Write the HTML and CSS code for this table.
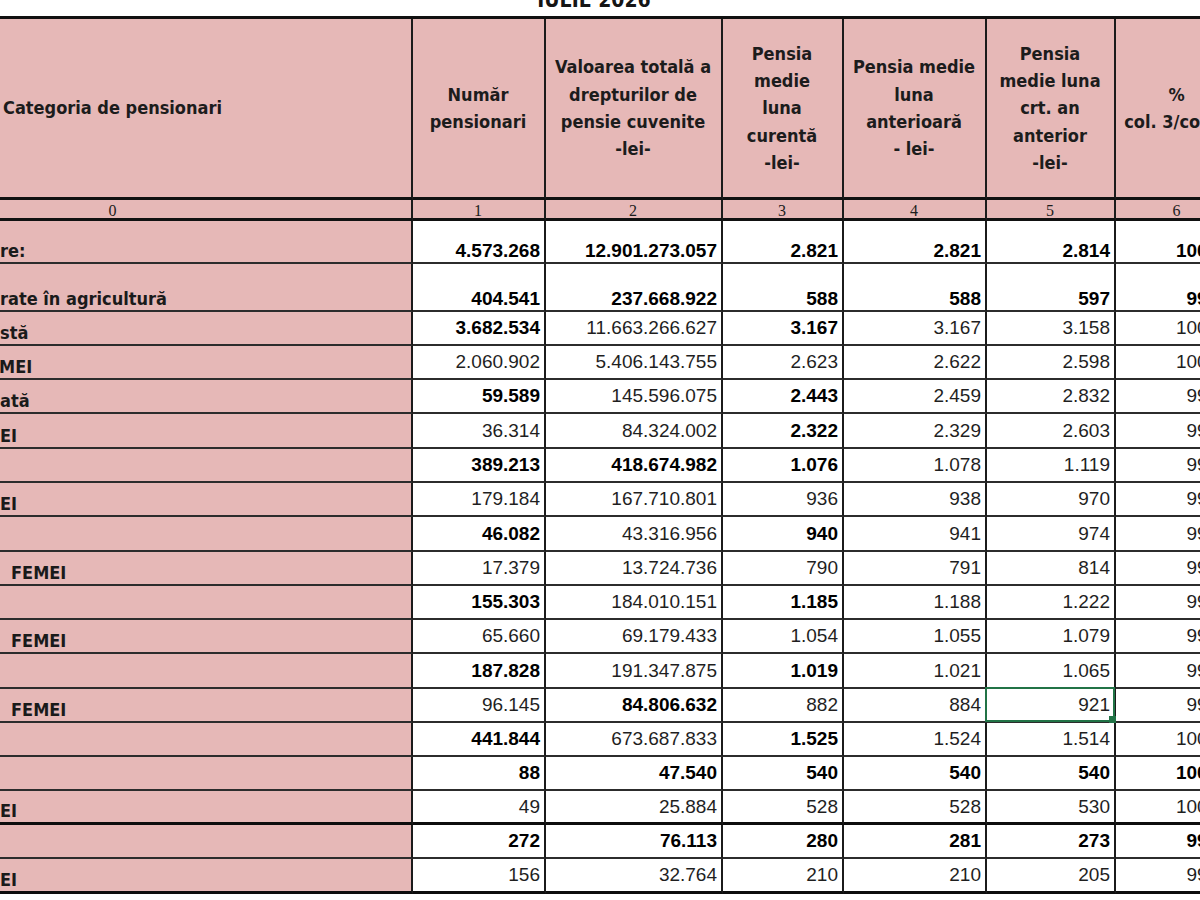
FILE: index.html
```html
<!DOCTYPE html>
<html lang="ro">
<head>
<meta charset="utf-8">
<title>Pensii – IULIE 2026</title>
<link rel="stylesheet" href="styles.css">
</head>
<body>
<div class="title">IULIE 2026</div>
<table class="sheet">
  <colgroup>
    <col class="c0"><col class="c1"><col class="c2"><col class="c3"><col class="c4"><col class="c5"><col class="c6">
  </colgroup>
  <thead>
    <tr class="head">
      <th class="cat">Categoria de pensionari</th>
      <th>Număr<br>pensionari</th>
      <th>Valoarea totală a<br>drepturilor de<br>pensie cuvenite<br>-lei-</th>
      <th>Pensia<br>medie<br>luna<br>curentă<br>-lei-</th>
      <th>Pensia medie<br>luna<br>anterioară<br>- lei-</th>
      <th>Pensia<br>medie luna<br>crt. an<br>anterior<br>-lei-</th>
      <th>%<br>col. 3/col. 4</th>
    </tr>
    <tr class="idx">
      <th class="cat">0</th><th>1</th><th>2</th><th>3</th><th>4</th><th>5</th><th>6</th>
    </tr>
  </thead>
  <tbody>
    <tr class="tall tall1">
      <td class="lbl">re:</td><td class="b">4.573.268</td><td class="b">12.901.273.057</td><td class="b">2.821</td><td class="b">2.821</td><td class="b">2.814</td><td class="b">100,00</td>
    </tr>
    <tr class="tall tall2">
      <td class="lbl">rate în agricultură</td><td class="b">404.541</td><td class="b">237.668.922</td><td class="b">588</td><td class="b">588</td><td class="b">597</td><td class="b">99,98</td>
    </tr>
    <tr class="r34">
      <td class="lbl">stă</td><td class="b">3.682.534</td><td>11.663.266.627</td><td class="b">3.167</td><td>3.167</td><td>3.158</td><td>100,01</td>
    </tr>
    <tr class="r34">
      <td class="lbl cut">EMEI</td><td>2.060.902</td><td>5.406.143.755</td><td>2.623</td><td>2.622</td><td>2.598</td><td>100,04</td>
    </tr>
    <tr class="r34">
      <td class="lbl">ată</td><td class="b">59.589</td><td>145.596.075</td><td class="b">2.443</td><td>2.459</td><td>2.832</td><td>99,35</td>
    </tr>
    <tr class="r35">
      <td class="lbl">EI</td><td>36.314</td><td>84.324.002</td><td class="b">2.322</td><td>2.329</td><td>2.603</td><td>99,70</td>
    </tr>
    <tr class="r34">
      <td class="lbl"></td><td class="b">389.213</td><td class="b">418.674.982</td><td class="b">1.076</td><td>1.078</td><td>1.119</td><td>99,81</td>
    </tr>
    <tr class="r34">
      <td class="lbl">EI</td><td>179.184</td><td>167.710.801</td><td>936</td><td>938</td><td>970</td><td>99,79</td>
    </tr>
    <tr class="r35">
      <td class="lbl"></td><td class="b">46.082</td><td>43.316.956</td><td class="b">940</td><td>941</td><td>974</td><td>99,89</td>
    </tr>
    <tr class="r34">
      <td class="lbl ind">FEMEI</td><td>17.379</td><td>13.724.736</td><td>790</td><td>791</td><td>814</td><td>99,87</td>
    </tr>
    <tr class="r34">
      <td class="lbl"></td><td class="b">155.303</td><td>184.010.151</td><td class="b">1.185</td><td>1.188</td><td>1.222</td><td>99,75</td>
    </tr>
    <tr class="r34">
      <td class="lbl ind">FEMEI</td><td>65.660</td><td>69.179.433</td><td>1.054</td><td>1.055</td><td>1.079</td><td>99,90</td>
    </tr>
    <tr class="r35">
      <td class="lbl"></td><td class="b">187.828</td><td>191.347.875</td><td class="b">1.019</td><td>1.021</td><td>1.065</td><td>99,80</td>
    </tr>
    <tr class="r34">
      <td class="lbl ind">FEMEI</td><td>96.145</td><td class="b">84.806.632</td><td>882</td><td>884</td><td class="selected">921</td><td>99,77</td>
    </tr>
    <tr class="r34">
      <td class="lbl"></td><td class="b">441.844</td><td>673.687.833</td><td class="b">1.525</td><td>1.524</td><td>1.514</td><td>100,07</td>
    </tr>
    <tr class="r34">
      <td class="lbl"></td><td class="b">88</td><td class="b">47.540</td><td class="b">540</td><td class="b">540</td><td class="b">540</td><td class="b">100,00</td>
    </tr>
    <tr class="r34 thick">
      <td class="lbl">EI</td><td>49</td><td>25.884</td><td>528</td><td>528</td><td>530</td><td>100,00</td>
    </tr>
    <tr class="r34">
      <td class="lbl"></td><td class="b">272</td><td class="b">76.113</td><td class="b">280</td><td class="b">281</td><td class="b">273</td><td class="b">99,64</td>
    </tr>
    <tr class="r35 thick">
      <td class="lbl">EI</td><td>156</td><td>32.764</td><td>210</td><td>210</td><td>205</td><td>99,98</td>
    </tr>
  </tbody>
</table>
</body>
</html>
```

FILE: styles.css
```css
* {
  box-sizing: border-box;
}

html,
body {
  margin: 0;
  padding: 0;
  overflow: hidden;
  background: #ffffff;
}

body {
  width: 1200px;
  height: 900px;
}

.title {
  width: 1188px;
  height: 20px;
  margin: -10px 0 6px;
  text-align: center;
  font-family: "DejaVu Sans Condensed", "DejaVu Sans", sans-serif;
  font-stretch: condensed;
  font-weight: bold;
  font-size: 21px;
  line-height: 20px;
  color: #151515;
}

.sheet {
  width: 1240px;
  table-layout: fixed;
  border-collapse: separate;
  border-spacing: 0;
  border-top: 3px solid #111111;
}

.c0 { width: 413px; }
.c1 { width: 133px; }
.c2 { width: 177px; }
.c3 { width: 121px; }
.c4 { width: 143px; }
.c5 { width: 129px; }
.c6 { width: 124px; }

.sheet th,
.sheet td {
  padding: 0 4px 0 3px;
  border-right: 2px solid #1b1b1b;
  border-bottom: 2px solid #2c2c2c;
  white-space: nowrap;
  overflow: hidden;
}

/* header */
.head {
  height: 181px;
}

.head th {
  background: #e6b8b7;
  border-bottom-width: 3px;
  border-bottom-color: #111111;
  font-family: "DejaVu Sans Condensed", "DejaVu Sans", sans-serif;
  font-stretch: condensed;
  font-weight: bold;
  font-size: 18px;
  line-height: 27.3px;
  color: #1c1c1c;
  text-align: center;
  vertical-align: middle;
}

.sheet th.cat {
  padding: 0 186px 0 0;
}

/* column index row */
.idx {
  height: 21px;
}

.idx th {
  background: #e6b8b7;
  border-bottom-width: 3px;
  border-bottom-color: #111111;
  font-family: "Liberation Serif", "Times New Roman", serif;
  font-weight: normal;
  font-size: 16px;
  line-height: 15px;
  color: #1c1c1c;
  text-align: center;
  vertical-align: bottom;
}

/* body */
.sheet tbody td {
  background: #ffffff;
  font-family: "Liberation Sans", Arial, sans-serif;
  font-size: 19px;
  line-height: 22px;
  color: #1f1f1f;
  text-align: right;
  vertical-align: middle;
}

.sheet tbody td.b {
  font-weight: bold;
  color: #000000;
}

.sheet tbody td.lbl {
  background: #e6b8b7;
  padding: 0;
  text-align: left;
  vertical-align: bottom;
  font-family: "DejaVu Sans Condensed", "DejaVu Sans", sans-serif;
  font-stretch: condensed;
  font-weight: bold;
  font-size: 18px;
  line-height: 22px;
  color: #1a1a1a;
}

.sheet tbody td.ind {
  padding-left: 11px;
}

.sheet tbody td.cut {
  text-indent: -12px;
}

.tall1 { height: 43px; }
.tall2 { height: 48px; }
.r34 { height: 34px; }
.r35 { height: 35px; }

.sheet tbody tr.tall td {
  vertical-align: bottom;
}

.sheet tr.thick td {
  border-bottom: 3px solid #0d0d0d;
}

/* active cell */
.sheet td.selected {
  position: relative;
  overflow: visible;
}

.sheet td.selected::after {
  content: "";
  position: absolute;
  top: -2px;
  left: -2px;
  right: -1px;
  bottom: -1px;
  border: 2px solid #217346;
}

.sheet td.selected::before {
  content: "";
  position: absolute;
  right: -2px;
  bottom: -2px;
  width: 7px;
  height: 7px;
  background: #217346;
  z-index: 1;
}
```
